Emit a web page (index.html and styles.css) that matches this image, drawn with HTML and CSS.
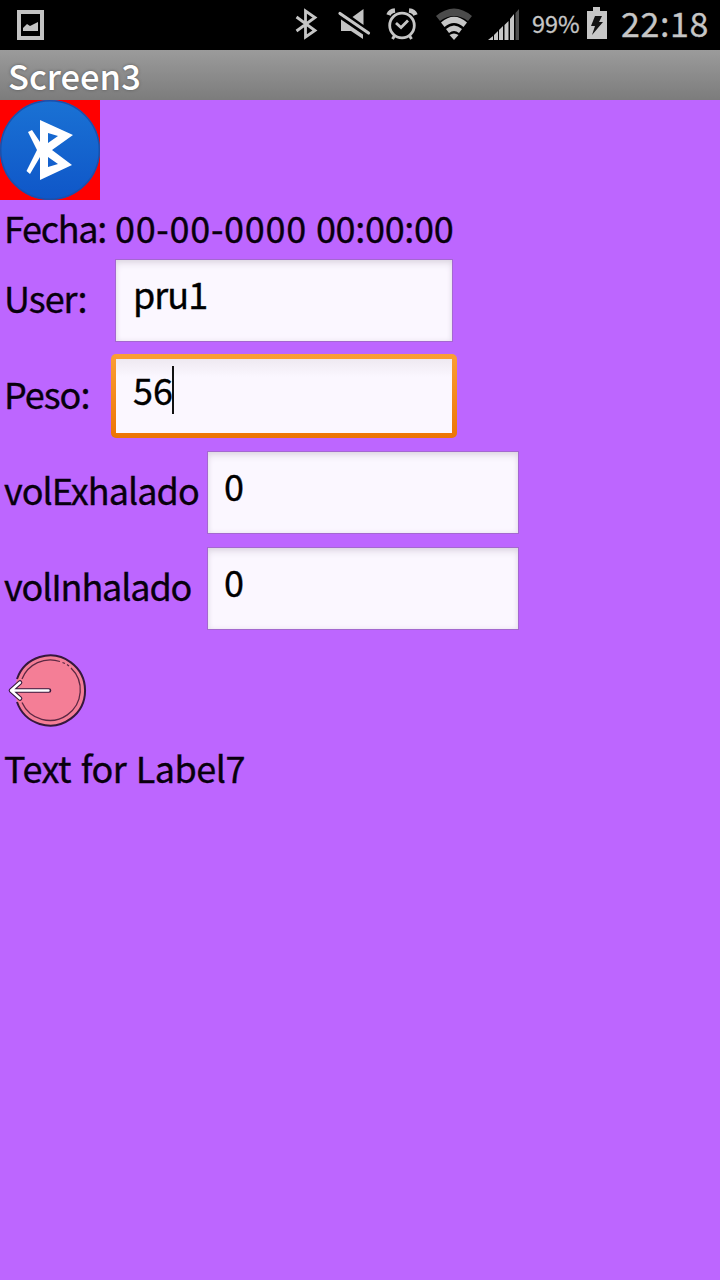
FILE: index.html
```html
<!DOCTYPE html>
<html lang="es">
<head>
<meta charset="utf-8">
<title>Screen3</title>
<link rel="stylesheet" href="styles.css">
</head>
<body>
<div class="status">
  <svg class="picture" width="27" height="30" viewBox="0 0 27 30"><path d="M2 2H25V28H2Z" fill="none" stroke="#c3c3c3" stroke-width="4"/><path d="M6 21V18L10 14L13 16L21 12V21Z" fill="#c3c3c3"/></svg>
  <svg class="tray" width="240" height="50" viewBox="280 0 240 50">
    <path d="M296.500 17L315 30.500L305.500 37V11L315 17.500L296.500 31" fill="none" stroke="#c6c6c6" stroke-width="2.800"/>
    <path d="M352.500 17L363.500 9V25ZM341 19.500L363 34.500V39L351 31H341Z" fill="#c3c3c3"/>
    <path d="M340 13.500L368.500 33" stroke="#000" stroke-width="6.500"/>
    <path d="M340 13.500L368.500 33" stroke="#c6c6c6" stroke-width="3.200" stroke-linecap="round"/>
    <g fill="none" stroke="#c6c6c6"><circle cx="402" cy="25.500" r="12.300" stroke-width="2.800"/><path d="M396 23L401 27.500L408 20.500" stroke-width="2.800"/><path d="M388.500 15Q390 11 395 10.500M409 10.500Q414 11 415.500 15" stroke-width="4.500"/><path d="M395 35L392.500 39M409 35L411.500 39" stroke-width="3"/></g>
    <path d="M436 16Q454 1 472 16L468 21Q454 11 440 21Z" fill="#4b4b4b"/>
    <path d="M441 22.500Q454 11 467 22.500L463.500 27Q454 19 444.500 27ZM446 29Q454 22 462 29L459 33Q454 29 449 33ZM449.500 35Q454 32 458.500 35L454 40Z" fill="#c6c6c6"/>
    <path d="M488 40L493 36V40ZM494 35L498 31V40H494ZM499 30L503 26V40H499ZM504.500 25L508.500 21V40H504.500ZM510 19L514 14V40H510Z" fill="#c6c6c6"/><path d="M515.500 13L519 9V40H515.500Z" fill="#505050"/>
  </svg>
  <span class="percent">99%</span>
  <svg class="battery" width="20" height="32" viewBox="0 0 20 32"><path d="M0 4H6V0H13V4H20V32H0Z" fill="#c6c6c6"/><path d="M8 9H15L12 15H16L5 28L8 19H4Z" fill="#111"/></svg>
  <span class="clock">22:18</span>
</div>
<header class="title"><span>Screen3</span></header>
<main>
  <div class="bluetooth">
    <svg width="100" height="100" viewBox="0 0 100 100"><defs><linearGradient id="blue" x2="0" y2="1"><stop stop-color="#1a72d4"/><stop offset="1" stop-color="#0f56c8"/></linearGradient></defs><circle cx="50" cy="50" r="50" fill="url(#blue)"/><circle cx="50" cy="50" r="49.300" fill="none" stroke="#1c4faa" stroke-width="1.400"/><path fill="#fff" fill-rule="evenodd" d="M40 20L73 35L52 50L72 65L40 80V57L30 74L26.500 71L37 50L28 32L32 30L40 42ZM48 33V43L58 36ZM48 57V67L58 64Z"/></svg>
  </div>
  <div class="date"><span class="fecha">Fecha:</span><span class="stamp"><span class="day">00-00-0000</span> <span class="time">00:00:00</span></span></div>
  <div class="row"><label class="short user">User:</label><div class="field"><span class="pru">pru1</span></div></div>
  <div class="row"><label class="short peso">Peso:</label><div class="field focus"><span>56</span><i class="caret"></i></div></div>
  <div class="row"><label class="long ex">volExhalado</label><div class="field wide"><span>0</span></div></div>
  <div class="row"><label class="long in">volInhalado</label><div class="field wide"><span>0</span></div></div>
  <div class="back">
    <svg width="100" height="100" viewBox="0 640 100 100"><circle cx="50" cy="690.500" r="35" fill="#f47e96"/><path d="M17 679A35 35 0 1 1 17 702" fill="none" stroke="#35183c" stroke-width="2"/><path d="M22 679A30.500 30.500 0 0 1 60 661.500M62.500 662.500L65 663.500M67 664.500L69 666M71 668A30.500 30.500 0 1 1 22 702.500" fill="none" stroke="#5c2843" stroke-width="1.300"/><path d="M49 690.500H12M20 682.500L11 690.500L20 698.500" fill="none" stroke="#35183c" stroke-width="4.600" stroke-linecap="round" stroke-linejoin="round"/><path d="M48.500 690.500H12M20 682.500L11 690.500L20 698.500" fill="none" stroke="#fff" stroke-width="2.400" stroke-linecap="round" stroke-linejoin="round"/></svg>
  </div>
  <div class="label7"><span>Text for Label7</span></div>
</main>
</body>
</html>
```
FILE: styles.css
```css
* { box-sizing: border-box; }
body { margin: 0; width: 720px; height: 1280px; overflow: hidden; background: #bd66ff; color: #08000d; font: 36px/54px "Noto Sans CJK SC", "Noto Sans", sans-serif; white-space: nowrap; }
svg { display: block; flex: none; }
main { -webkit-text-stroke: .35px currentColor; }
.status { display: flex; height: 50px; background: #000; color: #c6c6c6; }
.picture { margin: 10px 0 0 17px; }
.tray { margin-left: 236px; }
.percent { width: 55px; margin-left: 12px; font-size: 23.500px; line-height: 46px; -webkit-text-stroke: .3px currentColor; }
.battery { margin: 7px 0 0 0; }
.clock { margin-left: 14px; font-size: 34px; line-height: 46px; letter-spacing: .6px; -webkit-text-stroke: .3px currentColor; }
.title { height: 50px; padding-left: 8px; background: linear-gradient(#9b9b9b, #7c7c7c); color: #fff; font-size: 34.500px; line-height: 50px; font-weight: 500; text-shadow: 0 0 3px #555; }
.bluetooth { width: 100px; height: 100px; background: #f00; }
.date { display: flex; height: 52px; padding-left: 5px; }
.fecha { width: 111px; margin-left: -1px; letter-spacing: -1.300px; }
.stamp { word-spacing: 1px; }
.day { letter-spacing: .700px; }
.time { letter-spacing: -.300px; }
.row { display: flex; height: 96px; padding-left: 5px; }
label { line-height: 90px; }
.short { width: 112px; margin-left: -1px; }
.user { letter-spacing: -1px; }
.peso { letter-spacing: -1px; }
.long { width: 203px; margin-left: -1px; }
.ex { letter-spacing: -.950px; }
.in { letter-spacing: -1.150px; }
.pru { letter-spacing: -1px; }
.field { display: flex; width: 336px; height: 81px; margin-top: 8px; padding-left: 17px; background: #fbf7ff; line-height: 66px; color: #000; box-shadow: 0 0 0 1px #a468d0, inset 0 5px 8px -3px #d8d2dd, inset 0 0 5px #e8e0ed; }
.wide { width: 310px; margin-left: 1px; padding-left: 16px; }
.focus { width: 346px; height: 84px; margin: 6px 0 0 -5px; padding-left: 17px; border: 5px solid transparent; border-radius: 5px; line-height: 61px; background: linear-gradient(#eee9f1, #fbf7ff 18px) padding-box, linear-gradient(#fb9f35, #ed7505) border-box; box-shadow: none; }
.caret { width: 2px; height: 48px; margin: 7px 0 0 -1px; background: #111; }
.back { height: 104px; padding-top: 4px; }
.label7 { padding-left: 4px; letter-spacing: -.500px; word-spacing: 2px; }
```
